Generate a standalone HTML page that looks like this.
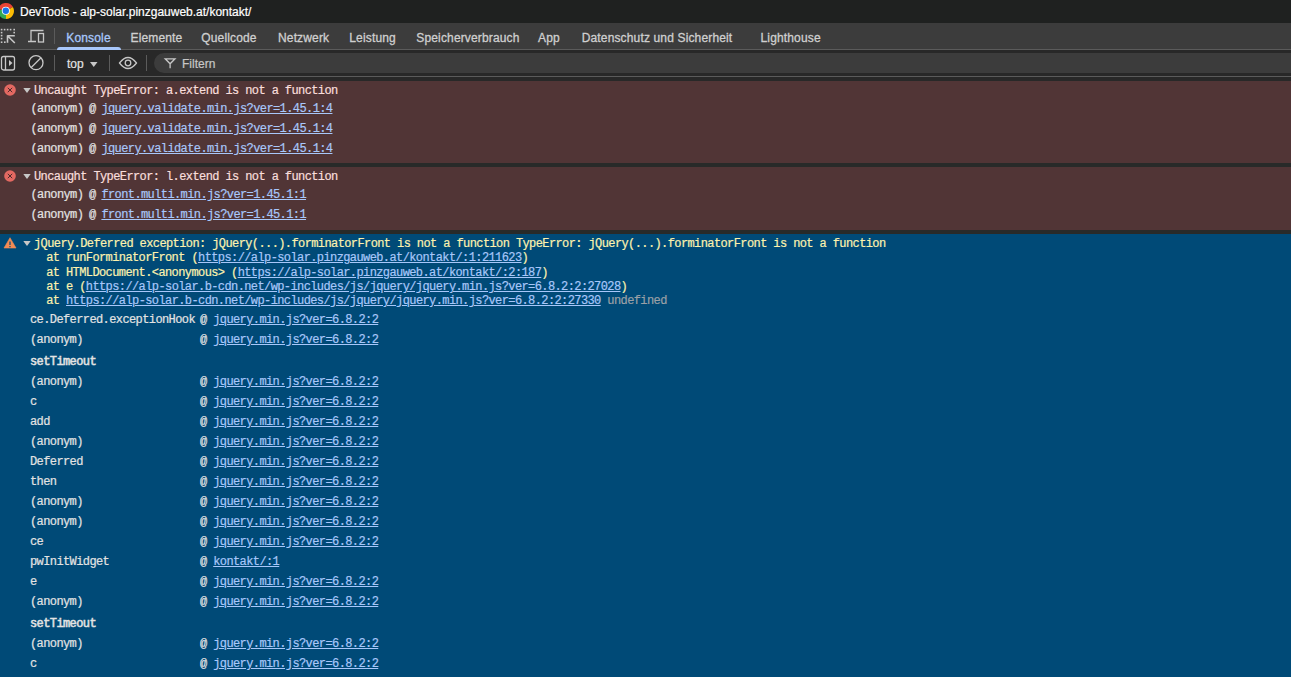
<!DOCTYPE html>
<html><head><meta charset="utf-8">
<style>
*{margin:0;padding:0;box-sizing:border-box}
html,body{width:1291px;height:677px;overflow:hidden;background:#004a77;font-family:"Liberation Sans",sans-serif}
.a{position:absolute;white-space:pre}
#title{left:0;top:0;width:1291px;height:23px;background:#1f2120}
#tabs{left:0;top:23px;width:1291px;height:26px;background:#3c3c3c}
#tabline{left:0;top:49px;width:1291px;height:1px;background:#5b5b5b}
#tool{left:0;top:50px;width:1291px;height:26px;background:#282828}
#toolline{left:0;top:76px;width:1291px;height:1px;background:#5b5b5b}
#tool2{left:0;top:77px;width:1291px;height:4px;background:#282828}
.err{left:0;width:1291px;background:#513536}
.sep{left:0;width:1291px;height:4px;background:#282a29}
.sans{font-size:12px;color:#e3e3e3;line-height:16px;-webkit-text-stroke:0.2px currentColor}
.tab{font-size:12px;color:#c7c7c7;top:30px;line-height:16px;letter-spacing:0.15px;-webkit-text-stroke:0.3px currentColor;color:#cfcfcf}
.m{font-family:"Liberation Mono",monospace;font-size:12px;letter-spacing:-0.6px;line-height:16px;height:16px;-webkit-text-stroke:0.2px currentColor}
.ce{color:#f9dedc}
.cs{color:#e3e3e3}
.cw{color:#fdf2ae}
.l{color:#a8c7fa;text-decoration:underline}
.g{color:#9aa0a6}
.b{-webkit-text-stroke:0.5px currentColor}
.vs{position:absolute;width:1px;background:#5b5b5b}
svg{position:absolute;overflow:visible}
</style></head><body>
<div class="a" id="title"></div>
<div class="a" id="tabs"></div>
<div class="a" id="tabline"></div>
<div class="a" id="tool"></div>
<div class="a" id="toolline"></div>
<div class="a" id="tool2"></div>

<div class="a err" style="top:81px;height:82px"></div>
<div class="a sep" style="top:163px"></div>
<div class="a err" style="top:167px;height:63px"></div>
<div class="a sep" style="top:230px"></div>

<!-- title -->
<svg style="left:0;top:0" width="16" height="23" viewBox="0 0 16 23">
  <path d="M6 11 L-1.727 8.93 A8 8 0 0 1 12.928 7 Z" fill="#ea4335"/>
  <path d="M6 11 L12.928 7 A8 8 0 0 1 6 19 Z" fill="#fbbc04"/>
  <path d="M6 11 L6 19 A8 8 0 0 1 -1.727 8.93 Z" fill="#34a853"/>
  <circle cx="5.8" cy="10.8" r="4" fill="#fff"/>
  <circle cx="5.8" cy="10.8" r="3.2" fill="#1a73e8"/>
</svg>
<div class="a sans" style="left:20px;top:4px;color:#fff">DevTools - alp-solar.pinzgauweb.at/kontakt/</div>

<!-- tab bar icons -->
<svg style="left:0;top:24px" width="50" height="24" viewBox="0 24 50 24">
  <rect x="0.8" y="28.8" width="1.6" height="1.6" fill="#c7c7c7"/><rect x="3.8" y="28.8" width="1.6" height="1.6" fill="#c7c7c7"/><rect x="6.8" y="28.8" width="1.6" height="1.6" fill="#c7c7c7"/><rect x="9.8" y="28.8" width="1.6" height="1.6" fill="#c7c7c7"/><rect x="13.4" y="28.8" width="1.6" height="1.6" fill="#c7c7c7"/><rect x="0.8" y="31.8" width="1.6" height="1.6" fill="#c7c7c7"/><rect x="0.8" y="34.8" width="1.6" height="1.6" fill="#c7c7c7"/><rect x="0.8" y="37.8" width="1.6" height="1.6" fill="#c7c7c7"/><rect x="0.8" y="41.4" width="1.6" height="1.6" fill="#c7c7c7"/><rect x="4.0" y="41.4" width="1.6" height="1.6" fill="#c7c7c7"/><rect x="13.4" y="31.8" width="1.6" height="1.6" fill="#c7c7c7"/>
  <g fill="none" stroke="#c7c7c7" stroke-width="1.3">
    <path d="M7.5 35.8 L14.8 43 M7.2 35.8 h7.6 M7.5 35.5 v7.3" stroke-width="1.6"/>
    <path d="M31 41 V30.5 H43.5 M28 41.5 H36"/>
    <rect x="38.5" y="33.5" width="5" height="8.5"/>
  </g>
</svg>
<div class="vs" style="left:54px;top:28px;height:16px"></div>

<!-- tabs -->
<div class="a tab" style="left:66.3px;color:#a8c7fa">Konsole</div>
<div class="a" style="left:57px;top:47px;width:64px;height:3px;background:#a8c7fa;border-radius:3px 3px 0 0"></div>
<div class="a tab" style="left:130.5px">Elemente</div>
<div class="a tab" style="left:201.3px">Quellcode</div>
<div class="a tab" style="left:278px">Netzwerk</div>
<div class="a tab" style="left:349.3px">Leistung</div>
<div class="a tab" style="left:416.3px">Speicherverbrauch</div>
<div class="a tab" style="left:538px">App</div>
<div class="a tab" style="left:581.7px">Datenschutz und Sicherheit</div>
<div class="a tab" style="left:760.5px">Lighthouse</div>

<!-- toolbar -->
<svg style="left:0;top:50px" width="160" height="26" viewBox="0 50 160 26">
  <g fill="none" stroke="#c7c7c7" stroke-width="1.3">
    <rect x="1.5" y="56.5" width="13" height="13.5" rx="2"/>
    <path d="M5.5 56.5 V70"/>
    <circle cx="36" cy="62.7" r="7"/>
    <path d="M31 67.7 L41 57.7"/>
    <path d="M119.5 63 Q128 52 136.5 63 Q128 74 119.5 63 Z"/>
    <circle cx="128" cy="63" r="2.8"/>
  </g>
  <path d="M9 60 L12.5 63 L9 66 Z" fill="#c7c7c7"/>
  <path d="M90 62 h7.5 l-3.75 5 Z" fill="#c7c7c7"/>
</svg>
<div class="vs" style="left:54px;top:55px;height:16px"></div>
<div class="vs" style="left:109px;top:55px;height:16px"></div>
<div class="vs" style="left:146px;top:55px;height:16px"></div>
<div class="a" style="left:154px;top:53px;width:1200px;height:20px;border-radius:10px;background:#3c3c3c"></div>
<svg style="left:160px;top:53px" width="20" height="20" viewBox="160 53 20 20">
  <path d="M165.2 58.8 H175 L170.1 63.8 Z M170.1 63.5 V68.2" fill="none" stroke="#c7c7c7" stroke-width="1.3" stroke-linejoin="miter"/>
</svg>
<div class="a sans" style="left:67px;top:56px;color:#e3e3e3">top</div>
<div class="a sans" style="left:182px;top:56px;color:#c7c7c7">Filtern</div>

<!-- message icons -->
<svg style="left:0;top:81px" width="40" height="160" viewBox="0 81 40 160">
  <circle cx="10" cy="90" r="5.8" fill="#e46962"/>
  <path d="M7.8 87.8 L12.2 92.2 M12.2 87.8 L7.8 92.2" stroke="#3a2525" stroke-width="0.9"/>
  <path d="M23.3 88 h7.4 l-3.7 5 Z" fill="#c7c7c7"/>
  <circle cx="10" cy="176" r="5.8" fill="#e46962"/>
  <path d="M7.8 173.8 L12.2 178.2 M12.2 173.8 L7.8 178.2" stroke="#3a2525" stroke-width="0.9"/>
  <path d="M23.3 174 h7.4 l-3.7 5 Z" fill="#c7c7c7"/>
  <path d="M10 237.7 L16 248 H4 Z" fill="#f28b54" stroke="#f28b54" stroke-width="0.6" stroke-linejoin="round"/>
  <path d="M10 241.5 V245" stroke="#004a77" stroke-width="1.2"/>
  <path d="M10 246 V247.2" stroke="#004a77" stroke-width="1.2"/>
  <path d="M23.3 241 h7.4 l-3.7 5 Z" fill="#c7c7c7"/>
</svg>

<!-- messages -->
<div class="a m ce" style="left:34px;top:83px">Uncaught TypeError: a.extend is not a function</div>
<div class="a m cs" style="left:30.5px;top:101px">(anonym)</div>
<div class="a m cs" style="left:88.9px;top:101px">@</div>
<div class="a m cs" style="left:101.4px;top:101px"><span class="l">jquery.validate.min.js?ver=1.45.1:4</span></div>
<div class="a m cs" style="left:30.5px;top:121px">(anonym)</div>
<div class="a m cs" style="left:88.9px;top:121px">@</div>
<div class="a m cs" style="left:101.4px;top:121px"><span class="l">jquery.validate.min.js?ver=1.45.1:4</span></div>
<div class="a m cs" style="left:30.5px;top:141px">(anonym)</div>
<div class="a m cs" style="left:88.9px;top:141px">@</div>
<div class="a m cs" style="left:101.4px;top:141px"><span class="l">jquery.validate.min.js?ver=1.45.1:4</span></div>
<div class="a m ce" style="left:34px;top:169px">Uncaught TypeError: l.extend is not a function</div>
<div class="a m cs" style="left:30.5px;top:187px">(anonym)</div>
<div class="a m cs" style="left:88.9px;top:187px">@</div>
<div class="a m cs" style="left:101.4px;top:187px"><span class="l">front.multi.min.js?ver=1.45.1:1</span></div>
<div class="a m cs" style="left:30.5px;top:207px">(anonym)</div>
<div class="a m cs" style="left:88.9px;top:207px">@</div>
<div class="a m cs" style="left:101.4px;top:207px"><span class="l">front.multi.min.js?ver=1.45.1:1</span></div>
<div class="a m cw" style="left:34px;top:236px">jQuery.Deferred exception: jQuery(...).forminatorFront is not a function TypeError: jQuery(...).forminatorFront is not a function</div>
<div class="a m cw" style="left:33px;top:250px">  at runForminatorFront (<span class="l">https://alp-solar.pinzgauweb.at/kontakt/:1:211623</span>)</div>
<div class="a m cw" style="left:33px;top:265px">  at HTMLDocument.&lt;anonymous&gt; (<span class="l">https://alp-solar.pinzgauweb.at/kontakt/:2:187</span>)</div>
<div class="a m cw" style="left:33px;top:279px">  at e (<span class="l">https://alp-solar.b-cdn.net/wp-includes/js/jquery/jquery.min.js?ver=6.8.2:2:27028</span>)</div>
<div class="a m cw" style="left:33px;top:293px">  at <span class="l">https://alp-solar.b-cdn.net/wp-includes/js/jquery/jquery.min.js?ver=6.8.2:2:27330</span> <span class="g">undefined</span></div>
<div class="a m cs" style="left:30px;top:312px">ce.Deferred.exceptionHook</div>
<div class="a m cs" style="left:200px;top:312px">@ <span class="l">jquery.min.js?ver=6.8.2:2</span></div>
<div class="a m cs" style="left:30px;top:332px">(anonym)</div>
<div class="a m cs" style="left:200px;top:332px">@ <span class="l">jquery.min.js?ver=6.8.2:2</span></div>
<div class="a m cs b" style="left:30px;top:354px">setTimeout</div>
<div class="a m cs" style="left:30px;top:374px">(anonym)</div>
<div class="a m cs" style="left:200px;top:374px">@ <span class="l">jquery.min.js?ver=6.8.2:2</span></div>
<div class="a m cs" style="left:30px;top:394px">c</div>
<div class="a m cs" style="left:200px;top:394px">@ <span class="l">jquery.min.js?ver=6.8.2:2</span></div>
<div class="a m cs" style="left:30px;top:414px">add</div>
<div class="a m cs" style="left:200px;top:414px">@ <span class="l">jquery.min.js?ver=6.8.2:2</span></div>
<div class="a m cs" style="left:30px;top:434px">(anonym)</div>
<div class="a m cs" style="left:200px;top:434px">@ <span class="l">jquery.min.js?ver=6.8.2:2</span></div>
<div class="a m cs" style="left:30px;top:454px">Deferred</div>
<div class="a m cs" style="left:200px;top:454px">@ <span class="l">jquery.min.js?ver=6.8.2:2</span></div>
<div class="a m cs" style="left:30px;top:474px">then</div>
<div class="a m cs" style="left:200px;top:474px">@ <span class="l">jquery.min.js?ver=6.8.2:2</span></div>
<div class="a m cs" style="left:30px;top:494px">(anonym)</div>
<div class="a m cs" style="left:200px;top:494px">@ <span class="l">jquery.min.js?ver=6.8.2:2</span></div>
<div class="a m cs" style="left:30px;top:514px">(anonym)</div>
<div class="a m cs" style="left:200px;top:514px">@ <span class="l">jquery.min.js?ver=6.8.2:2</span></div>
<div class="a m cs" style="left:30px;top:534px">ce</div>
<div class="a m cs" style="left:200px;top:534px">@ <span class="l">jquery.min.js?ver=6.8.2:2</span></div>
<div class="a m cs" style="left:30px;top:554px">pwInitWidget</div>
<div class="a m cs" style="left:200px;top:554px">@ <span class="l">kontakt/:1</span></div>
<div class="a m cs" style="left:30px;top:574px">e</div>
<div class="a m cs" style="left:200px;top:574px">@ <span class="l">jquery.min.js?ver=6.8.2:2</span></div>
<div class="a m cs" style="left:30px;top:594px">(anonym)</div>
<div class="a m cs" style="left:200px;top:594px">@ <span class="l">jquery.min.js?ver=6.8.2:2</span></div>
<div class="a m cs b" style="left:30px;top:616px">setTimeout</div>
<div class="a m cs" style="left:30px;top:636px">(anonym)</div>
<div class="a m cs" style="left:200px;top:636px">@ <span class="l">jquery.min.js?ver=6.8.2:2</span></div>
<div class="a m cs" style="left:30px;top:656px">c</div>
<div class="a m cs" style="left:200px;top:656px">@ <span class="l">jquery.min.js?ver=6.8.2:2</span></div>

</body></html>
